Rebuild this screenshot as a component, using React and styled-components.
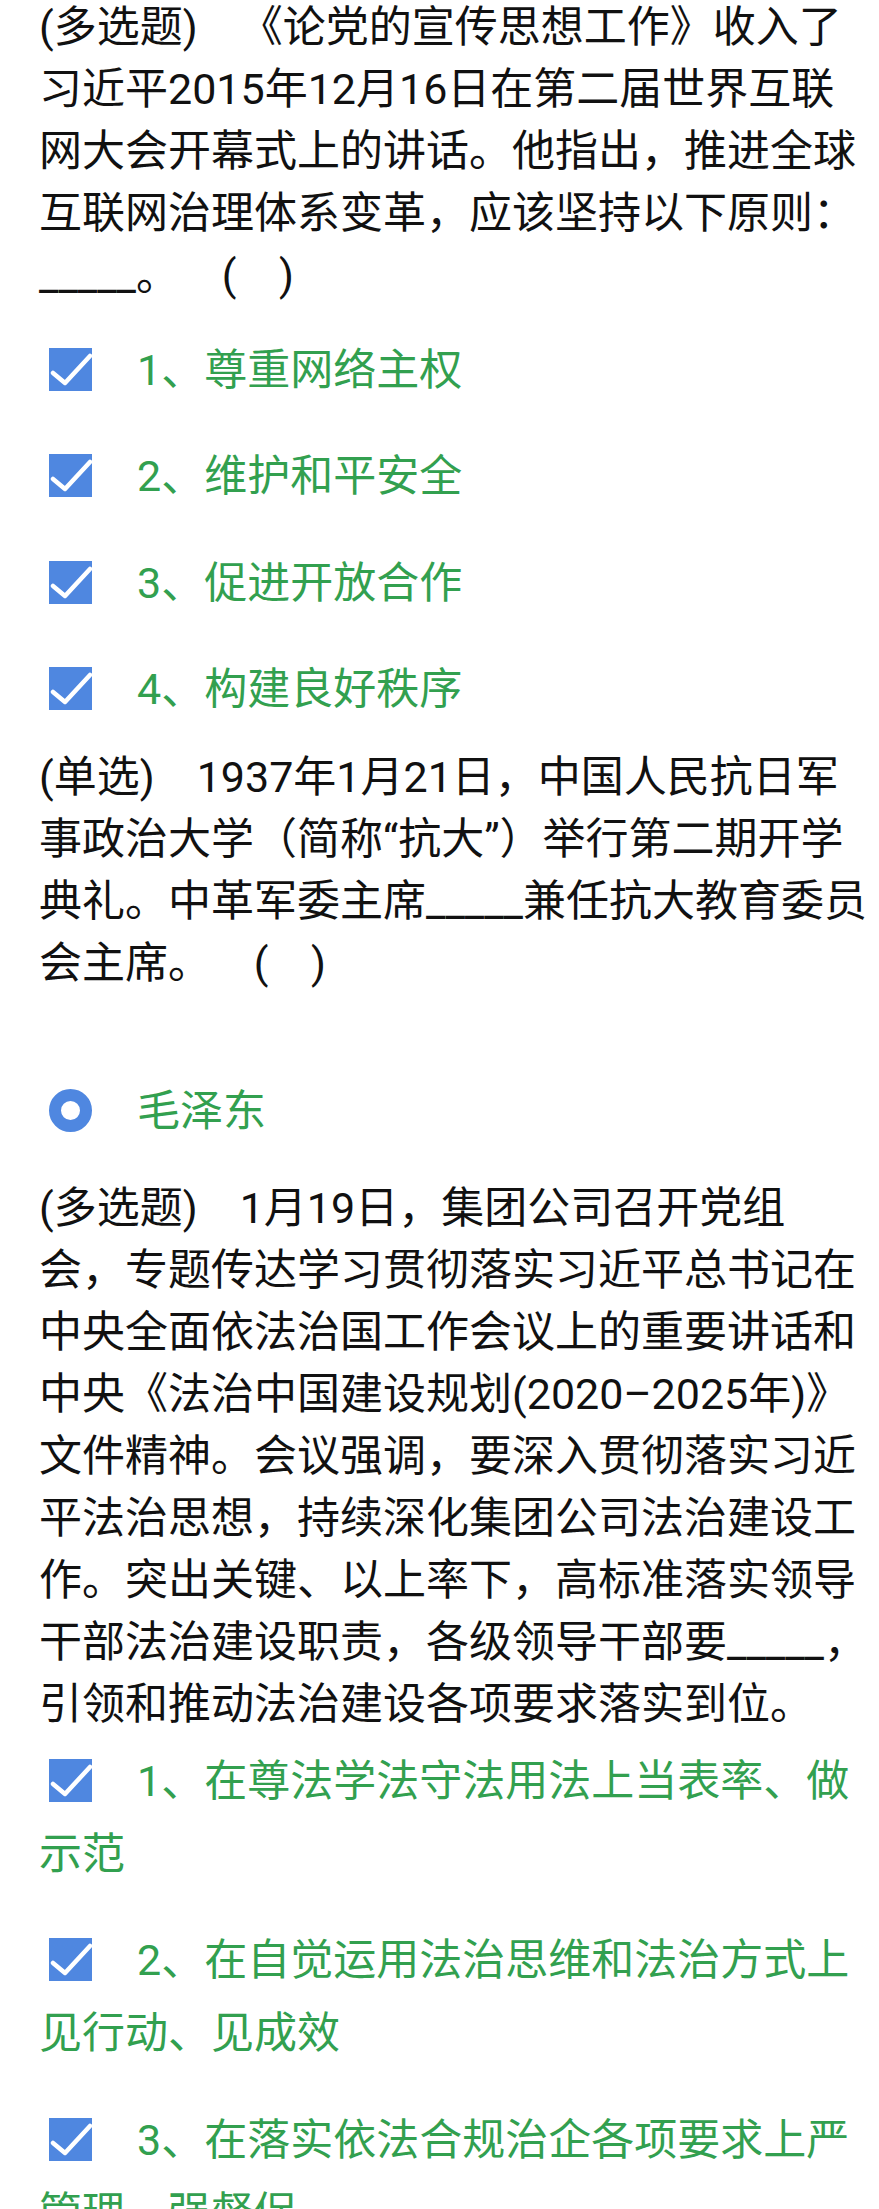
import React from "react";
import styled, { createGlobalStyle } from "styled-components";

const GlobalStyle = createGlobalStyle`
  html,
  body {
    margin: 0;
    padding: 0;
    background: #fff;
  }
  body {
    font-family: Roboto, "Noto Sans CJK SC", sans-serif;
  }
`;

const Page = styled.div`
  width: 879px;
  height: 2209px;
  overflow: hidden;
  box-sizing: border-box;
  padding: 0 11px 0 39px;
  font-size: 43px;
  text-spacing-trim: space-all;
`;

const Question = styled.p`
  margin: ${(p) => p.$top}px 0 0;
  line-height: 62px;
  color: #111;
`;

const Tag = styled.span`
  margin-right: 42px;
`;

const OptionList = styled.div`
  display: flex;
  flex-direction: column;
  gap: 33.5px;
  margin-top: ${(p) => p.$top}px;
`;

const Option = styled.p`
  margin: 0;
  line-height: 73px;
  color: #32a04f;
`;

const CheckIcon = styled.svg`
  display: inline-block;
  width: 43px;
  height: 43px;
  vertical-align: top;
  margin: 14px 45px 0 10px;
`;

const Radio = styled.span`
  display: inline-block;
  width: 43px;
  height: 43px;
  box-sizing: border-box;
  border: 12.5px solid #4f87e0;
  border-radius: 50%;
  vertical-align: top;
  margin: 14px 45px 0 10px;
`;

const Check = () => (
  <CheckIcon viewBox="0 0 43 43">
    <rect width="43" height="43" fill="#4f87e0" />
    <polyline
      points="4,25 16,35 41,8"
      fill="none"
      stroke="#fff"
      strokeWidth="4.5"
      strokeLinecap="round"
      strokeLinejoin="round"
    />
  </CheckIcon>
);

const sp = "\u00a0\u00a0\u00a0\u00a0";

const q1Options = ["1、尊重网络主权", "2、维护和平安全", "3、促进开放合作", "4、构建良好秩序"];

const q3Options = [
  "1、在尊法学法守法用法上当表率、做示范",
  "2、在自觉运用法治思维和法治方式上见行动、见成效",
  "3、在落实依法合规治企各项要求上严管理、强督促",
];

const App = () => (
  <>
    <GlobalStyle />
    <Page>
      <Question $top={-4}>
        <Tag>(多选题)</Tag>
        《论党的宣传思想工作》收入了习近平2015年12月16日在第二届世界互联网大会开幕式上的讲话。他指出，推进全球互联网治理体系变革，应该坚持以下原则：_____。{sp}({sp})
      </Question>
      <OptionList $top={27.5}>
        {q1Options.map((text) => (
          <Option key={text}>
            <Check />
            {text}
          </Option>
        ))}
      </OptionList>

      <Question $top={20}>
        <Tag>(单选)</Tag>
        1937年1月21日，中国人民抗日军事政治大学（简称“抗大”）举行第二期开学典礼。中革军委主席_____兼任抗大教育委员会主席。{sp}({sp})
      </Question>
      <OptionList $top={80.5}>
        <Option>
          <Radio />
          毛泽东
        </Option>
      </OptionList>

      <Question $top={29.5}>
        <Tag>(多选题)</Tag>
        1月19日，集团公司召开党组会，专题传达学习贯彻落实习近平总书记在中央全面依法治国工作会议上的重要讲话和中央《法治中国建设规划(2020–2025年)》文件精神。会议强调，要深入贯彻落实习近平法治思想，持续深化集团公司法治建设工作。突出关键、以上率下，高标准落实领导干部法治建设职责，各级领导干部要_____，引领和推动法治建设各项要求落实到位。
      </Question>
      <OptionList $top={9.5}>
        {q3Options.map((text) => (
          <Option key={text}>
            <Check />
            {text}
          </Option>
        ))}
      </OptionList>
    </Page>
  </>
);

export default App;
